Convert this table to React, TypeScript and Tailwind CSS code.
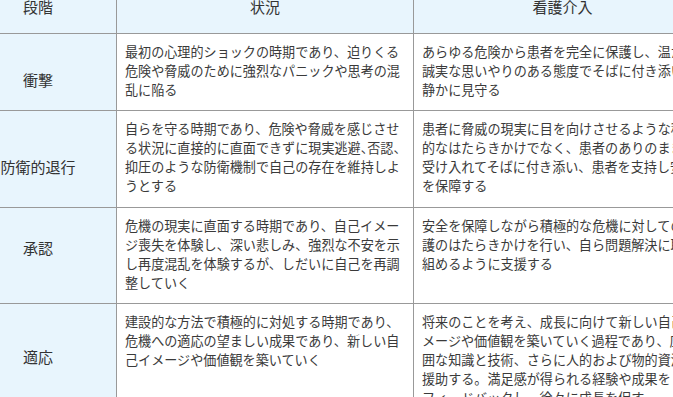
import React from "react";

const H = ({ children }: { children: React.ReactNode }) => (
  <span className="[font-feature-settings:'halt']">{children}</span>
);

const rows: {
  label: string;
  pad: string;
  situation: React.ReactNode;
  care: React.ReactNode;
}[] = [
  {
    label: "衝撃",
    pad: "pt-[36px]",
    situation:
      "最初の心理的ショックの時期であり、迫りくる危険や脅威のために強烈なパニックや思考の混乱に陥る",
    care:
      "あらゆる危険から患者を完全に保護し、温かく誠実な思いやりのある態度でそばに付き添い、静かに見守る",
  },
  {
    label: "防衛的退行",
    pad: "pt-[46px] pb-[30px]",
    situation: (
      <>
        自らを守る時期であり、危険や脅威を感じさせる状況に直接的に直面できずに現実逃避
        <H>、</H>否認<H>、</H>
        抑圧のような防衛機制で自己の存在を維持しようとする
      </>
    ),
    care:
      "患者に脅威の現実に目を向けさせるような積極的なはたらきかけでなく、患者のありのままを受け入れてそばに付き添い、患者を支持し安全を保障する",
  },
  {
    label: "承認",
    pad: "pt-[30px]",
    situation:
      "危機の現実に直面する時期であり、自己イメージ喪失を体験し、深い悲しみ、強烈な不安を示し再度混乱を体験するが、しだいに自己を再調整していく",
    care:
      "安全を保障しながら積極的な危機に対しての看護のはたらきかけを行い、自ら問題解決に取り組めるように支援する",
  },
  {
    label: "適応",
    pad: "pt-[43px]",
    situation:
      "建設的な方法で積極的に対処する時期であり、危機への適応の望ましい成果であり、新しい自己イメージや価値観を築いていく",
    care: (
      <>
        将来のことを考え、成長に向けて新しい自己イメージや価値観を築いていく過程であり、広範囲な知識と技術、さらに人的および物的資源を援助する。満足感が得られる経験や成果を
        <br />
        フィードバックし、徐々に成長を促す
      </>
    ),
  },
];

export default function App() {
  return (
    <div
      className="w-[673px] h-[397px] overflow-hidden bg-white"
      style={{ fontFamily: '"Noto Sans CJK JP", "Noto Sans", sans-serif' }}
    >
      <table className="table-fixed border-collapse ml-[-41px] mt-[-12px] w-[752px] text-[#333]">
        <colgroup>
          <col className="w-[157px]" />
          <col className="w-[297px]" />
          <col className="w-[298px]" />
        </colgroup>
        <thead>
          <tr>
            {["段階", "状況", "看護介入"].map((h) => (
              <th
                key={h}
                className="border border-[#999] bg-[#e8f5fd] text-[15px] leading-5 font-normal text-center pt-2 pb-4 px-2 text-[#333]"
              >
                {h}
              </th>
            ))}
          </tr>
        </thead>
        <tbody>
          {rows.map((r) => (
            <tr key={r.label}>
              <td
                className={`border border-[#999] bg-[#e8f5fd] text-[15px] leading-5 text-center align-top px-2 ${r.pad} text-[#333]`}
              >
                {r.label}
              </td>
              <td className="border border-[#999] bg-white text-[13.1px] leading-[19px] align-top px-2 pt-2 pb-[11px] text-[#3a3a3a]">
                {r.situation}
              </td>
              <td className="border border-[#999] bg-white text-[13.1px] leading-[19px] align-top px-2 pt-2 pb-[11px] text-[#3a3a3a]">
                {r.care}
              </td>
            </tr>
          ))}
        </tbody>
      </table>
    </div>
  );
}
